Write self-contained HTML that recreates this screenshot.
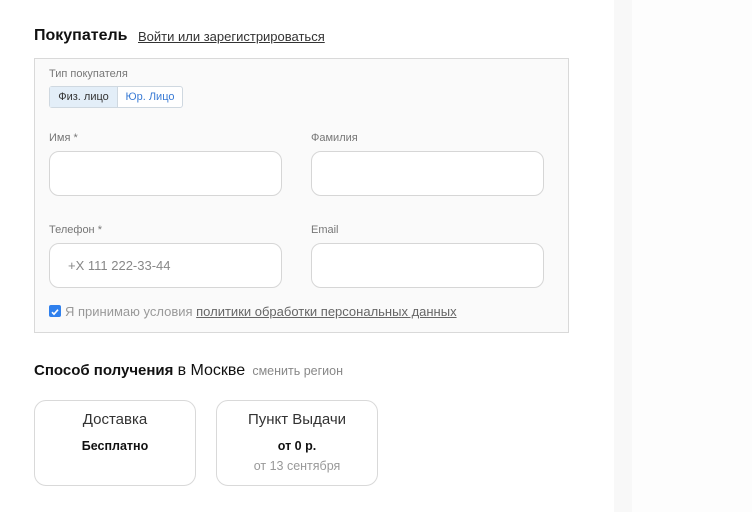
<!DOCTYPE html>
<html><head><meta charset="utf-8"><style>
body{margin:0;width:752px;height:512px;background:#fff;font-family:"Liberation Sans",Arial,sans-serif;position:relative;overflow:hidden}
.a{position:absolute}
.strip{left:614px;top:0;width:18px;height:512px;background:#f8f8f8}
.strip2{left:632px;top:0;width:120px;height:512px;background:#fdfdfd}
h2{margin:0;font-size:16px;font-weight:bold;color:#111}
.lnk{font-size:13px;color:#333;text-decoration:underline}
.box{left:34px;top:58px;width:533px;height:273px;background:#fafafa;border:1px solid #d9d9d9}
.lbl{font-size:11px;color:#777}
.inp{width:233px;height:45px;border:1px solid #d6d6d6;border-radius:10px;background:#fff;box-sizing:border-box}
.tg{left:49px;top:86px;height:22px;border:1px solid #cfd8e0;border-radius:3px;display:flex;font-size:11px;box-sizing:border-box;background:#fff}
.card{width:162px;height:86px;border:1px solid #d9d9d9;border-radius:12px;box-sizing:border-box;text-align:center;background:#fff}
</style></head><body>
<div class="a strip"></div><div class="a strip2"></div>
<div class="a" style="left:34px;top:27px"><h2>Покупатель</h2></div>
<div class="a lnk" style="left:138px;top:29px">Войти или зарегистрироваться</div>
<div class="a box"></div>
<div class="a lbl" style="left:49px;top:68px">Тип покупателя</div>
<div class="a tg"><div style="width:67px;background:#e3eef8;color:#333;line-height:20px;text-align:center;border-right:1px solid #cfd8e0">Физ. лицо</div><div style="width:64px;color:#3a7bd5;line-height:20px;text-align:center">Юр. Лицо</div></div>
<div class="a lbl" style="left:49px;top:132px">Имя *</div>
<div class="a lbl" style="left:311px;top:132px">Фамилия</div>
<div class="a inp" style="left:49px;top:151px"></div>
<div class="a inp" style="left:311px;top:151px"></div>
<div class="a lbl" style="left:49px;top:224px">Телефон *</div>
<div class="a lbl" style="left:311px;top:224px">Email</div>
<div class="a inp" style="left:49px;top:243px"></div>
<div class="a" style="left:68px;top:258px;font-size:13px;color:#888">+X 111 222-33-44</div>
<div class="a inp" style="left:311px;top:243px"></div>
<div class="a" style="left:49px;top:305px;width:12px;height:12px;background:#2f80ed;border-radius:2px"><svg width="12" height="12"><path d="M3 6.2l2 2 4-4.5" stroke="#fff" stroke-width="1.6" fill="none"/></svg></div>
<div class="a" style="left:65px;top:304px;font-size:13px;color:#999">Я принимаю условия <span style="color:#666;text-decoration:underline">политики обработки персональных данных</span></div>
<div class="a" style="left:34px;top:362px;font-size:15px;color:#111"><b>Способ получения</b> <span style="font-size:16px">в Москве</span> <span style="font-size:12.5px;color:#888;margin-left:3px">сменить регион</span></div>
<div class="a card" style="left:34px;top:400px"><div style="font-size:15px;color:#333;margin-top:10px">Доставка</div><div style="font-size:12.5px;font-weight:bold;color:#111;margin-top:11px">Бесплатно</div></div>
<div class="a card" style="left:216px;top:400px"><div style="font-size:15px;color:#333;margin-top:10px">Пункт Выдачи</div><div style="font-size:12.5px;font-weight:bold;color:#111;margin-top:11px">от 0 р.</div><div style="font-size:12.5px;color:#999;margin-top:6px">от 13 сентября</div></div>
</body></html>
